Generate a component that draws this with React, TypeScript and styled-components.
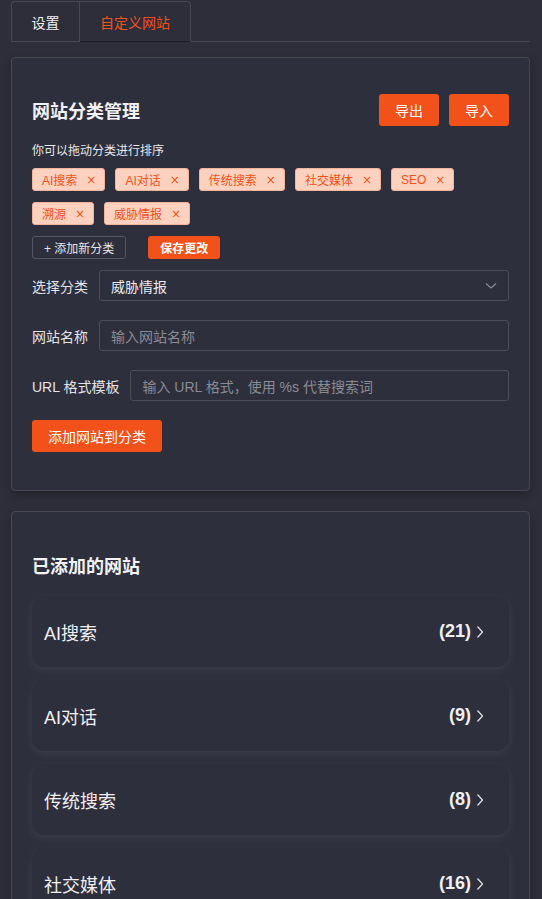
import React from "react";
import styled, { createGlobalStyle } from "styled-components";

const GlobalStyle = createGlobalStyle`
  html, body {
    margin: 0;
    padding: 0;
    background: #2d2e3a;
  }
  body {
    font-family: "Liberation Sans", "Noto Sans CJK SC", sans-serif;
    color: #e6e6ea;
  }
  * { box-sizing: border-box; }
`;

const orange = "#f2511a";

const Page = styled.div`
  padding: 1px 12px 0 11px;
`;

const TabBar = styled.div`
  display: flex;
  border-bottom: 1px solid #474852;
  height: 41px;
`;

const Tab = styled.div<{ active?: boolean }>`
  height: 41px;
  width: ${(p) => (p.active ? "111px" : "69px")};
  display: flex;
  align-items: center;
  justify-content: center;
  white-space: nowrap;
  font-size: 14px;
  color: ${(p) => (p.active ? orange : "#f0f0f3")};
  border: 1px solid #474852;
  border-bottom: ${(p) => (p.active ? "1px solid #1c1d24" : "none")};
  border-left: ${(p) => (p.active ? "none" : "1px solid #474852")};
  border-radius: ${(p) => (p.active ? "0 4px 0 0" : "4px 0 0 0")};
  margin-bottom: -1px;
`;

const Card = styled.section<{ pad?: string; gap?: string }>`
  margin-top: ${(p) => p.gap || "15px"};
  border: 1px solid #474852;
  border-radius: 4px;
  background: #2e2f3c;
  box-shadow: 0 4px 10px rgba(0, 0, 0, 0.25);
  padding: ${(p) => p.pad || "36px 20px 38px 20px"};
`;

const HeadRow = styled.div`
  display: flex;
  align-items: center;
  justify-content: space-between;
  height: 32px;
`;

const Title = styled.h2`
  margin: 0;
  font-size: 18px;
  font-weight: 700;
  color: #f2f2f6;
`;

const BtnGroup = styled.div`
  display: flex;
  gap: 10px;
`;

const OrangeBtn = styled.button<{ small?: boolean }>`
  background: ${orange};
  color: #fff;
  border: none;
  border-radius: 3px;
  font-family: inherit;
  font-size: ${(p) => (p.small ? "12px" : "14px")};
  font-weight: ${(p) => (p.small ? 700 : 400)};
  height: ${(p) => (p.small ? "23px" : "32px")};
  padding: 0 ${(p) => (p.small ? "12px" : "16px")};
  cursor: pointer;
`;

const Hint = styled.div`
  margin-top: 15px;
  font-size: 12px;
  color: #e8e8ec;
`;

const TagWrap = styled.div`
  display: flex;
  flex-wrap: wrap;
  gap: 11px 10px;
  margin-top: 10px;
  width: 430px;
`;

const Tag = styled.span`
  display: inline-flex;
  align-items: center;
  height: 23px;
  padding: 0 8px 0 9px;
  background: #fcd1bf;
  border: 1px solid #f3b49b;
  border-radius: 3px;
  color: ${orange};
  font-size: 12px;
  gap: 9px;
`;

const Close = styled.span`
  font-family: "DejaVu Sans", sans-serif;
  font-size: 12px;
  line-height: 1;
`;

const ActionRow = styled.div`
  display: flex;
  gap: 22px;
  margin-top: 11px;
`;

const GhostBtn = styled.button`
  background: transparent;
  border: 1px solid #555661;
  border-radius: 3px;
  color: #e6e6ea;
  font-family: inherit;
  font-size: 12px;
  height: 23px;
  padding: 0 11px;
`;

const Field = styled.div<{ first?: boolean }>`
  display: flex;
  align-items: center;
  gap: 11px;
  margin-top: ${(p) => (p.first ? "11px" : "19px")};
`;

const Label = styled.label`
  font-size: 14px;
  color: #e3e3e8;
  white-space: nowrap;
`;

const Box = styled.div`
  flex: 1;
  height: 31px;
  border: 1px solid #4c4d58;
  border-radius: 3px;
  display: flex;
  align-items: center;
  padding: 0 11px;
  font-size: 14px;
  justify-content: space-between;
`;

const Value = styled.span`
  color: #ececf0;
`;

const Placeholder = styled.span`
  color: #8a8b94;
`;

const Submit = styled.div`
  margin-top: 19px;
`;

const List = styled.div`
  display: flex;
  flex-direction: column;
  gap: 13px;
  margin-top: 18px;
`;

const Item = styled.div`
  height: 71px;
  border-radius: 12px;
  background: #2e2f3c;
  box-shadow: 0 3px 10px rgba(255, 255, 255, 0.07);
  display: flex;
  align-items: center;
  justify-content: space-between;
  padding: 0 24px 0 12px;
  font-size: 18px;
  color: #f0f0f4;
`;

const Count = styled.span`
  display: flex;
  align-items: center;
  gap: 4px;
  font-weight: 700;
`;

const tags = ["AI搜索", "AI对话", "传统搜索", "社交媒体", "SEO", "溯源", "威胁情报"];

const sites: [string, number][] = [
  ["AI搜索", 21],
  ["AI对话", 9],
  ["传统搜索", 8],
  ["社交媒体", 16],
];

const Chevron = () => (
  <svg width="10" height="16" viewBox="0 0 10 16" fill="none">
    <path d="M2.5 2.5 L7.5 8 L2.5 13.5" stroke="#e6e6ea" strokeWidth="1.2" />
  </svg>
);

const Down = () => (
  <svg width="12" height="8" viewBox="0 0 12 8" fill="none">
    <path d="M1 1.5 L6 6 L11 1.5" stroke="#8a8b94" strokeWidth="1.2" />
  </svg>
);

export default function App() {
  return (
    <Page>
      <GlobalStyle />
      <TabBar>
        <Tab>设置</Tab>
        <Tab active>自定义网站</Tab>
      </TabBar>

      <Card>
        <HeadRow>
          <Title>网站分类管理</Title>
          <BtnGroup>
            <OrangeBtn>导出</OrangeBtn>
            <OrangeBtn>导入</OrangeBtn>
          </BtnGroup>
        </HeadRow>
        <Hint>你可以拖动分类进行排序</Hint>
        <TagWrap>
          {tags.map((t) => (
            <Tag key={t}>
              {t}
              <Close>×</Close>
            </Tag>
          ))}
        </TagWrap>
        <ActionRow>
          <GhostBtn>+ 添加新分类</GhostBtn>
          <OrangeBtn small>保存更改</OrangeBtn>
        </ActionRow>
        <Field first>
          <Label>选择分类</Label>
          <Box>
            <Value>威胁情报</Value>
            <Down />
          </Box>
        </Field>
        <Field>
          <Label>网站名称</Label>
          <Box>
            <Placeholder>输入网站名称</Placeholder>
          </Box>
        </Field>
        <Field>
          <Label>URL 格式模板</Label>
          <Box>
            <Placeholder>输入 URL 格式，使用 %s 代替搜索词</Placeholder>
          </Box>
        </Field>
        <Submit>
          <OrangeBtn>添加网站到分类</OrangeBtn>
        </Submit>
      </Card>

      <Card gap="20px" pad="40px 20px 40px 20px">
        <Title>已添加的网站</Title>
        <List>
          {sites.map(([name, n]) => (
            <Item key={name}>
              <span>{name}</span>
              <Count>
                ({n})
                <Chevron />
              </Count>
            </Item>
          ))}
        </List>
      </Card>
    </Page>
  );
}
